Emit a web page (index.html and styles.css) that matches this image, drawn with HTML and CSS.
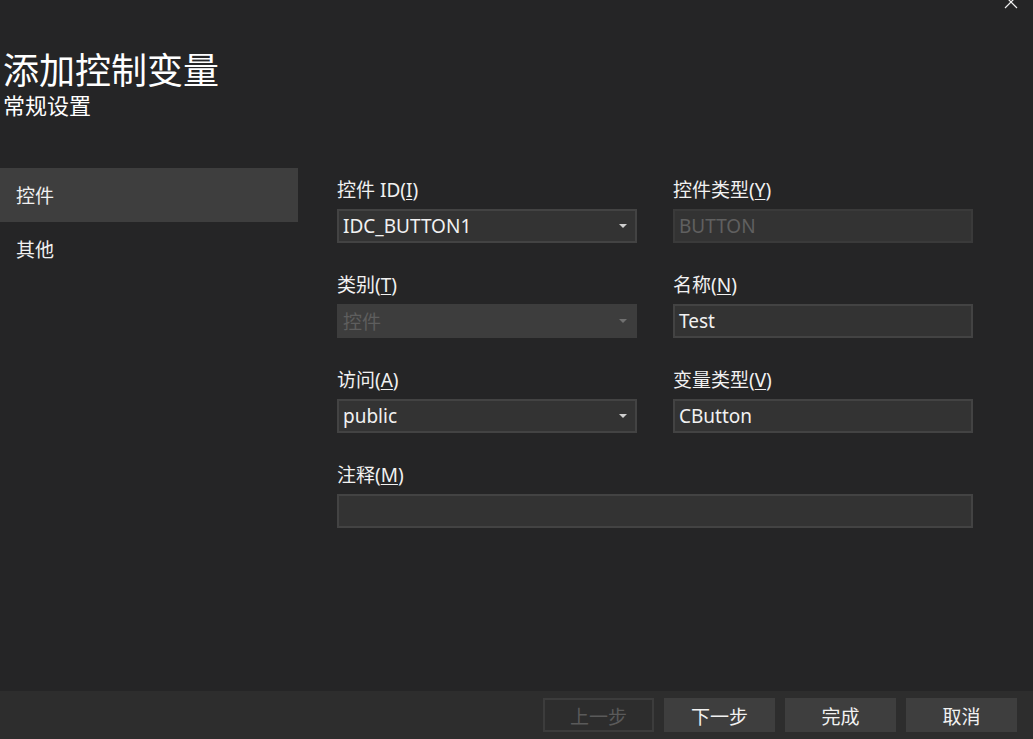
FILE: index.html
```html
<!DOCTYPE html>
<html lang="zh-CN">
<head>
<meta charset="utf-8">
<title>添加控制变量</title>
<link rel="stylesheet" href="styles.css">
</head>
<body>
<div class="dialog">
  <button class="close" aria-label="关闭">
    <svg width="14" height="14" viewBox="0 0 14 14"><path d="M1 1 L13 13 M13 1 L1 13" stroke="#f0f0f0" stroke-width="1.2" fill="none"/></svg>
  </button>
  <header class="header">
    <h1 class="title">添加控制变量</h1>
    <h2 class="subtitle">常规设置</h2>
  </header>
  <div class="main">
    <nav class="sidebar">
      <div class="nav-item active">控件</div>
      <div class="nav-item">其他</div>
    </nav>
    <form class="form">
      <div class="field">
        <label class="label">控件 ID(<u>I</u>)</label>
        <div class="input select"><span class="value">IDC_BUTTON1</span><span class="arrow"></span></div>
      </div>
      <div class="field">
        <label class="label">控件类型(<u>Y</u>)</label>
        <div class="input readonly"><span class="value">BUTTON</span></div>
      </div>
      <div class="field">
        <label class="label">类别(<u>T</u>)</label>
        <div class="input select disabled"><span class="value">控件</span><span class="arrow"></span></div>
      </div>
      <div class="field">
        <label class="label">名称(<u>N</u>)</label>
        <div class="input"><span class="value">Test</span></div>
      </div>
      <div class="field">
        <label class="label">访问(<u>A</u>)</label>
        <div class="input select"><span class="value">public</span><span class="arrow"></span></div>
      </div>
      <div class="field">
        <label class="label">变量类型(<u>V</u>)</label>
        <div class="input"><span class="value">CButton</span></div>
      </div>
      <div class="field wide">
        <label class="label">注释(<u>M</u>)</label>
        <div class="input"><span class="value"></span></div>
      </div>
    </form>
  </div>
  <footer class="footer">
    <button class="btn disabled">上一步</button>
    <button class="btn">下一步</button>
    <button class="btn">完成</button>
    <button class="btn">取消</button>
  </footer>
</div>
</body>
</html>
```

FILE: styles.css
```css
* { box-sizing: border-box; }
html, body { margin: 0; padding: 0; }
body {
  width: 1033px;
  height: 739px;
  background: #252526;
  color: #f1f1f1;
  font-family: "Segoe UI", "Noto Sans", "Noto Sans CJK SC", sans-serif;
  overflow: hidden;
}
.dialog {
  position: relative;
  height: 739px;
  display: flex;
  flex-direction: column;
}
.close {
  position: absolute;
  top: -5px;
  right: 15px;
  width: 14px;
  height: 14px;
  padding: 0;
  border: 0;
  background: transparent;
}
.close svg { display: block; }
.header {
  height: 168px;
  padding: 52px 0 0 3px;
}
.title {
  margin: 0;
  font-weight: normal;
  font-size: 36px;
  line-height: 40px;
  font-family: "Liberation Sans", "Noto Sans CJK SC", sans-serif;
  color: #ffffff;
}
.subtitle {
  margin: 2px 0 0;
  font-weight: normal;
  font-size: 22px;
  line-height: 26px;
  font-family: "Liberation Sans", "Noto Sans CJK SC", sans-serif;
  color: #ffffff;
}
.main {
  flex: 1;
  display: flex;
}
.sidebar {
  width: 298px;
  flex: none;
}
.nav-item {
  height: 54px;
  line-height: 54px;
  padding-left: 16px;
  font-size: 19px;
  font-family: "Noto Sans CJK SC", sans-serif;
  color: #f1f1f1;
}
.nav-item.active { background: #3e3e3e; }
.form {
  margin: 0;
  padding: 10px 0 0 39px;
  display: grid;
  grid-template-columns: 300px 300px;
  column-gap: 36px;
  row-gap: 30px;
  align-content: start;
}
.field.wide { grid-column: 1 / 3; }
.label {
  display: block;
  height: 31px;
  font-size: 19px;
  line-height: 24px;
  color: #f1f1f1;
  font-family: "Segoe UI", "Noto Sans", "Noto Sans CJK SC", sans-serif;
}
.label u { text-underline-offset: 2px; }
.input {
  height: 34px;
  border: 2px solid #434343;
  background: #333333;
  display: flex;
  align-items: center;
  padding: 0 4px;
  font-size: 19px;
  color: #f1f1f1;
}
.input .value { flex: 1; white-space: nowrap; }
.input.readonly { border-color: #3a3a3a; color: #606060; }
.input.disabled { border-color: #3d3d3d; background: #3d3d3d; color: #5e5e5e; }
.arrow {
  width: 0;
  height: 0;
  border-left: 4px solid transparent;
  border-right: 4px solid transparent;
  border-top: 4px solid #d0d0d0;
  margin-right: 4px;
}
.input.disabled .arrow { border-top-color: #707070; }
.footer {
  height: 48px;
  background: #2d2d2d;
  display: flex;
  justify-content: flex-end;
  align-items: center;
  gap: 10px;
  padding-right: 16px;
}
.btn {
  width: 111px;
  height: 34px;
  border: 1px solid #3e3e3e;
  background: #3e3e3e;
  color: #f1f1f1;
  font-size: 19px;
  font-family: "Noto Sans CJK SC", sans-serif;
  padding: 0;
}
.btn.disabled {
  background: transparent;
  border: 2px solid #3c3c3c;
  color: #5a5a5a;
}
```
